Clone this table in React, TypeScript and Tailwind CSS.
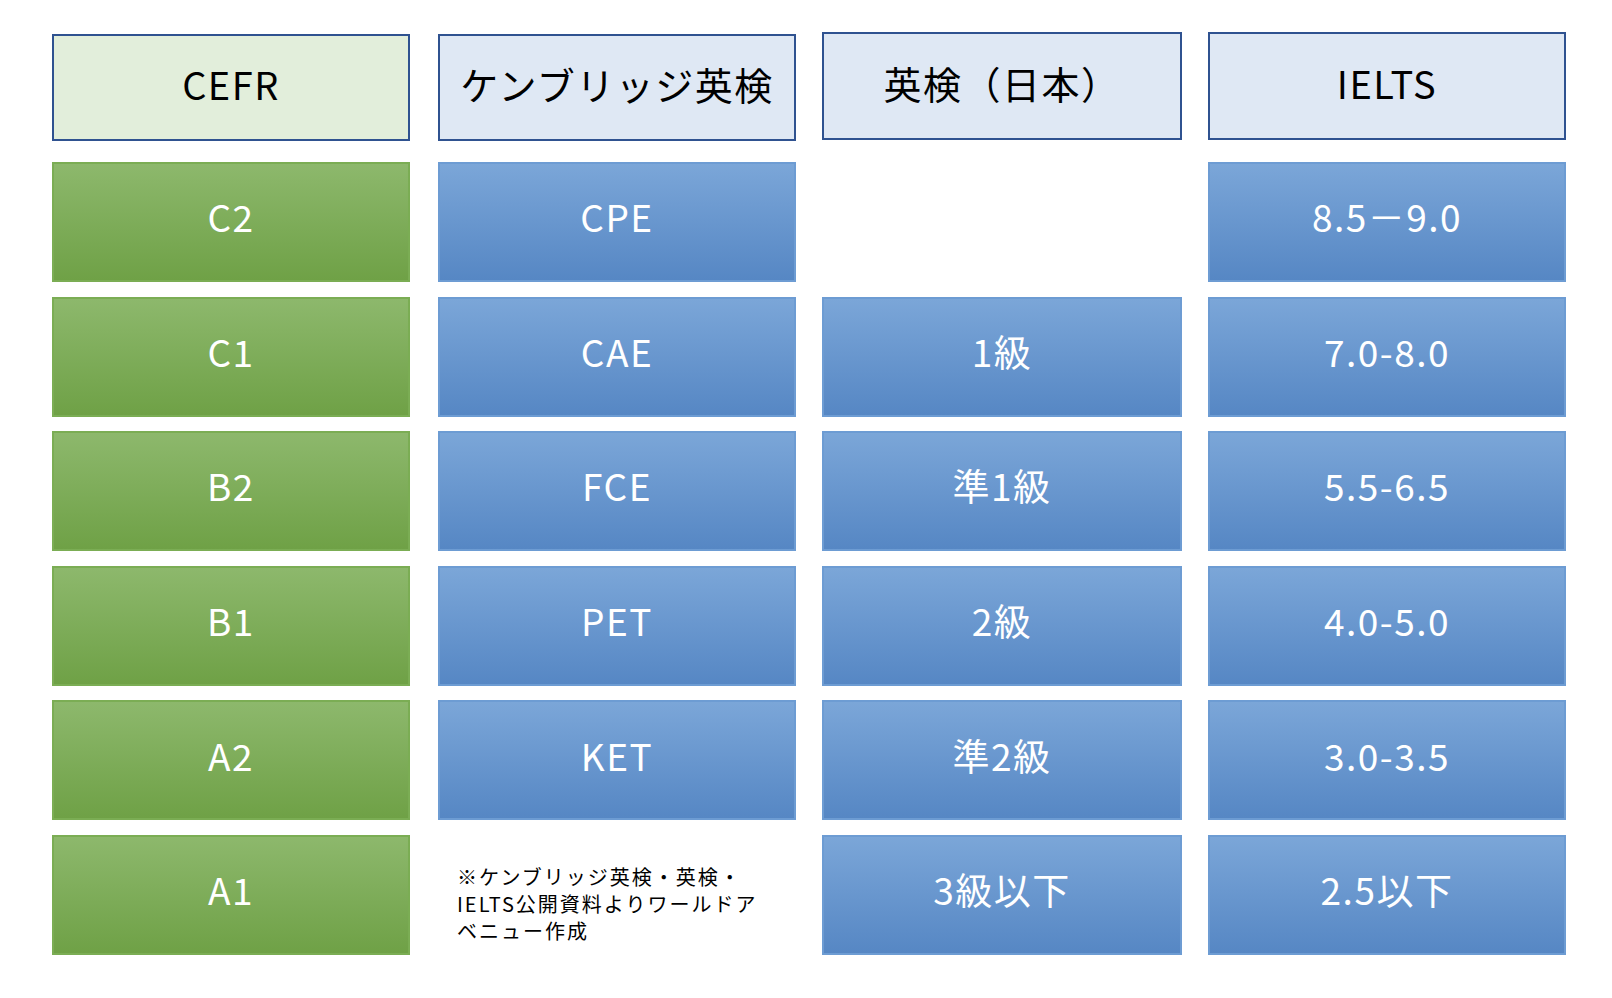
const FONT = "font-['Noto_Sans_CJK_JP','Noto_Sans',sans-serif]";

type Cell = { text: string; kind: "green" | "blue" | "empty" | "note" };

const ROWS: Cell[][] = [
  [
    { text: "C2", kind: "green" },
    { text: "CPE", kind: "blue" },
    { text: "", kind: "empty" },
    { text: "8.5－9.0", kind: "blue" },
  ],
  [
    { text: "C1", kind: "green" },
    { text: "CAE", kind: "blue" },
    { text: "1級", kind: "blue" },
    { text: "7.0-8.0", kind: "blue" },
  ],
  [
    { text: "B2", kind: "green" },
    { text: "FCE", kind: "blue" },
    { text: "準1級", kind: "blue" },
    { text: "5.5-6.5", kind: "blue" },
  ],
  [
    { text: "B1", kind: "green" },
    { text: "PET", kind: "blue" },
    { text: "2級", kind: "blue" },
    { text: "4.0-5.0", kind: "blue" },
  ],
  [
    { text: "A2", kind: "green" },
    { text: "KET", kind: "blue" },
    { text: "準2級", kind: "blue" },
    { text: "3.0-3.5", kind: "blue" },
  ],
  [
    { text: "A1", kind: "green" },
    { text: "", kind: "note" },
    { text: "3級以下", kind: "blue" },
    { text: "2.5以下", kind: "blue" },
  ],
];

const NOTE_LINES = ["※ケンブリッジ英検・英検・", "IELTS公開資料よりワールドア", "ベニュー作成"];

function BodyCell({ cell, first }: { cell: Cell; first: boolean }) {
  const width = first ? "w-[358px]" : "w-full";

  if (cell.kind === "empty") return <div className={width} />;

  if (cell.kind === "note") {
    return (
      <div className={`${width} flex flex-col pl-[19px] pt-[28px] text-[20px] tracking-[2px] text-black`}>
        {NOTE_LINES.map((line) => (
          <div key={line} className="h-[27px] leading-[27px]">
            {line}
          </div>
        ))}
      </div>
    );
  }

  return (
    <div
      className={`${width} h-full flex items-center justify-center border-2 pb-[10px] text-[37px] tracking-[1.5px] text-white ${
        cell.kind === "green"
          ? "border-[#7bad54] bg-gradient-to-b from-[#8db86c] to-[#6fa146]"
          : "border-[#6d9cd3] bg-gradient-to-b from-[#7ba6d8] to-[#5687c4]"
      }`}
    >
      {cell.text}
    </div>
  );
}

export default function App() {
  return (
    <div className={`min-h-screen bg-white pl-[52px] pt-[32px] ${FONT}`}>
      {/* Header row */}
      <div className="grid h-[109px] grid-cols-[360px_358px_360px_358px] gap-x-[26px] text-[38px] tracking-[1.5px] text-black">
        <div className="mt-[2px] flex h-[107px] w-[358px] items-center justify-center border-2 border-[#2f5290] bg-[#e2eedb] pb-[8px]">
          CEFR
        </div>
        <div className="mt-[2px] flex h-[107px] items-center justify-center border-2 border-[#2f5290] bg-[#dfe8f4] pb-[8px]">
          ケンブリッジ英検
        </div>
        <div className="flex h-[108px] items-center justify-center border-2 border-[#2f5290] bg-[#dfe8f4] pb-[8px]">
          英検（日本）
        </div>
        <div className="flex h-[108px] items-center justify-center border-2 border-[#2f5290] bg-[#dfe8f4] pb-[8px]">
          IELTS
        </div>
      </div>

      {/* Level rows */}
      <div className="mt-[21px] flex flex-col gap-[14.6px]">
        {ROWS.map((row, i) => (
          <div key={i} className="grid h-[120px] grid-cols-[360px_358px_360px_358px] gap-x-[26px]">
            {row.map((cell, j) => (
              <BodyCell key={j} cell={cell} first={j === 0} />
            ))}
          </div>
        ))}
      </div>
    </div>
  );
}
